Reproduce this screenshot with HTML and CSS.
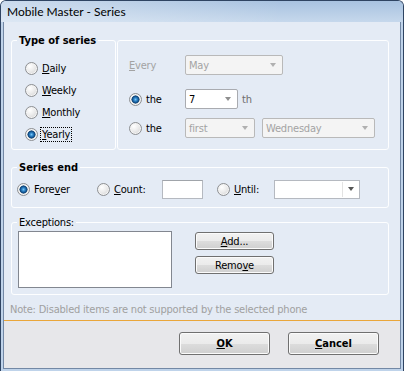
FILE: index.html
```html
<!DOCTYPE html>
<html>
<head>
	<title>Mobile Master - Series</title>
	<link rel="stylesheet" href="styles.css">
</head>
<body>
	<div class="window">
		<div class="titlebar">Mobile Master - Series</div>
		<div class="client">
			<div class="main">
				<div class="type-row">
					<fieldset class="group type-group">
						<legend>Type of series</legend>
						<div class="type-list">
							<label class="option"><span class="radio"></span><span><u>D</u>aily</span></label>
							<label class="option"><span class="radio"></span><span><u>W</u>eekly</span></label>
							<label class="option"><span class="radio"></span><span><u>M</u>onthly</span></label>
							<label class="option"><span class="radio checked"></span><span class="focus"><u>Y</u>early</span></label>
						</div>
					</fieldset>
					<fieldset class="group pattern-group">
						<div class="pattern">
							<div class="pattern-row">
								<span class="pattern-label disabled"><u>E</u>very</span>
								<div class="combo disabled combo-month"><span>May</span><i class="arrow"></i></div>
							</div>
							<div class="pattern-row row-day">
								<label class="pattern-label option"><span class="radio checked"></span><span>the</span></label>
								<div class="combo combo-day"><span>7</span><i class="arrow"></i></div>
								<span class="suffix">th</span>
							</div>
							<div class="pattern-row row-week">
								<label class="pattern-label option"><span class="radio"></span><span>the</span></label>
								<div class="combo disabled combo-nth"><span>first</span><i class="arrow"></i></div>
								<div class="combo disabled combo-weekday"><span>Wednesday</span><i class="arrow"></i></div>
							</div>
						</div>
					</fieldset>
				</div>

				<fieldset class="group end-group">
					<legend>Series end</legend>
					<div class="end-row">
						<label class="option opt-forever"><span class="radio checked"></span><span>Fore<u>v</u>er</span></label>
						<label class="option opt-count"><span class="radio"></span><span><u>C</u>ount:</span></label>
						<div class="textbox"></div>
						<label class="option opt-until"><span class="radio"></span><span><u>U</u>ntil:</span></label>
						<div class="combo date-combo"><span></span><b class="sep"></b><i class="arrow"></i></div>
					</div>
				</fieldset>

				<fieldset class="group exceptions-group">
					<legend>Exceptions:</legend>
					<div class="exceptions">
						<div class="listbox"></div>
						<div class="side-buttons">
							<button class="btn"><u>A</u>dd...</button>
							<button class="btn">Remo<u>v</u>e</button>
						</div>
					</div>
				</fieldset>

				<div class="note">Note: Disabled items are not supported by the selected phone</div>
			</div>
			<div class="footer">
				<button class="btn btn-big"><u>O</u>K</button>
				<button class="btn btn-big"><u>C</u>ancel</button>
			</div>
		</div>
	</div>
</body>
</html>
```

FILE: styles.css
```css
* {
	box-sizing: border-box;
}
html, body {
	margin: 0;
	height: 100%;
	overflow: hidden;
}
body {
	font-family: "DejaVu Sans Condensed", "DejaVu Sans", sans-serif;
	font-size: 11px;
	letter-spacing: -0.2px;
	color: #000;
	background: #fff;
}
u {
	text-decoration: underline;
	text-underline-offset: 1px;
}

/* window frame */
.window {
	width: 404px;
	height: 371px;
	display: flex;
	flex-direction: column;
	background: #bfd3ea; /* frame colour */
	border: 1px solid #2f4462;
	border-bottom: none;
	border-radius: 6px 6px 0 0;
	overflow: hidden;
}
.titlebar {
	height: 21px;
	flex: none;
	padding-left: 6px;
	line-height: 21px;
	font-family: Lato, "Liberation Sans", sans-serif;
	font-size: 12px;
	letter-spacing: 0;
	color: #000;
	background:
		linear-gradient(to right, rgba(255, 255, 255, 0.4), rgba(255, 255, 255, 0) 70%),
		linear-gradient(#a8c2e0, #c6d8ec);
}
.client {
	flex: 1;
	display: flex;
	flex-direction: column;
	margin: 0 2px 2px;
	border: 1px solid #7388a5;
	border-top: none;
}
.main {
	background: #e4ebf5;
	padding: 11px 11px 3px 7px;
}

/* group boxes */
.group {
	margin: 0;
	padding: 0;
	min-width: 0;
	border: 1px solid #fdfeff;
	border-radius: 3px;
}
.group legend {
	margin-left: 5px;
	padding: 0 2px;
	line-height: 15px;
	font-weight: bold;
	letter-spacing: 0;
}
.exceptions-group legend {
	font-weight: normal;
	letter-spacing: -0.2px;
}

.type-row {
	display: flex;
	gap: 1px;
}
.type-group {
	width: 105px;
	flex: none;
}
.type-list {
	padding: 9px 0 4px 13px;
}
.type-list .option {
	height: 22px;
}

.option {
	display: flex;
	align-items: center;
	white-space: nowrap;
}
.radio {
	width: 13px;
	height: 13px;
	flex: none;
	margin-right: 4px;
	border: 1px solid #8d8f92;
	border-radius: 50%;
	background: radial-gradient(circle at 35% 30%, #ffffff 0%, #ececec 45%, #cdcdcd 100%);
	box-shadow: inset 0 0 0 1px #f4f4f4;
}
.radio.checked {
	background:
		radial-gradient(circle at 50% 50%, #7cc6f6 0, #2f86c9 1.6px, #0f4a84 3.3px, #335c80 3.9px, rgba(0, 0, 0, 0) 4.3px),
		radial-gradient(circle at 35% 30%, #ffffff 0%, #ececec 45%, #cdcdcd 100%);
}
.focus {
	outline: 1px dotted #000;
	padding: 0 1px;
	margin-left: -1px;
}

/* recurrence pattern */
.pattern-group {
	flex: 1;
	margin-top: 7px;
}
.pattern {
	padding: 14px 0 10px 11px;
}
.pattern-row {
	display: flex;
	align-items: center;
	height: 20px;
}
.row-day {
	margin-top: 14px;
}
.row-week {
	margin-top: 9px;
}
.pattern-label {
	width: 56px;
	flex: none;
}
.disabled {
	color: #a3a3a3;
}
.suffix {
	margin-left: 4px;
	color: #6e6e6e;
}

/* combo boxes */
.combo {
	height: 20px;
	display: flex;
	align-items: center;
	padding-left: 3px;
	background: #fff;
	border: 1px solid #a9abb0;
	border-radius: 2px;
}
.combo.disabled {
	background: #f4f4f4;
	border-color: #b9b9b9;
}
.combo .arrow {
	margin-left: auto;
	margin-right: 6px;
	border-left: 3.5px solid transparent;
	border-right: 3.5px solid transparent;
	border-top: 4px solid #8f8f8f;
}
.combo.disabled .arrow {
	border-top-color: #b0b0b0;
}
.combo-month {
	width: 98px;
}
.combo-day {
	width: 53px;
}
.combo-nth {
	width: 70px;
}
.combo-weekday {
	width: 113px;
	margin-left: 7px;
}

/* series end */
.end-group {
	margin-top: 10px;
}
.end-row {
	display: flex;
	align-items: center;
	height: 18px;
	margin: 5px 0 9px 5px;
}
.opt-forever {
	width: 80px;
}
.opt-count {
	width: 65px;
}
.opt-until {
	width: 57px;
}
.textbox {
	width: 41px;
	height: 19px;
	margin-right: 14px;
	background: #fff;
	border: 1px solid #b5b9c0;
	border-top-color: #a0a4aa;
}
.date-combo {
	width: 86px;
	height: 19px;
	border-radius: 0;
	border-color: #b5b9c0;
}
.date-combo .sep {
	margin-left: auto;
	width: 1px;
	height: 15px;
	background: #e3e3e3;
}
.date-combo .arrow {
	margin-left: 5px;
	margin-right: 5px;
	border-top-color: #555;
}

/* exceptions */
.exceptions-group {
	margin-top: 7px;
}
.exceptions {
	display: flex;
	align-items: flex-start;
	padding: 1px 0 6px 6px;
}
.listbox {
	width: 154px;
	height: 57px;
	background: #fff;
	border: 1px solid #828790;
}
.side-buttons {
	display: flex;
	flex-direction: column;
	gap: 6px;
	margin: 1px 0 0 23px;
}

.btn {
	width: 79px;
	height: 18px;
	display: flex;
	align-items: center;
	justify-content: center;
	padding: 0;
	font: inherit;
	letter-spacing: inherit;
	color: #000;
	border: 1px solid #707070;
	border-radius: 3px;
	background: linear-gradient(#f2f2f2, #ebebeb 50%, #dddddd 50%, #cfcfcf);
	box-shadow: inset 0 0 0 1px #fbfbfb;
}

.note {
	margin: 7px 0 0 -1px;
	line-height: 15px;
	color: #a0a0a0;
	white-space: nowrap;
}

/* bottom buttons */
.footer {
	flex: 1;
	display: flex;
	justify-content: flex-end;
	align-items: flex-start;
	gap: 18px;
	padding: 11px 21px 0 0;
	background: #e7e7ea;
	border-top: 1px solid #eaa63a;
}
.btn-big {
	width: 91px;
	height: 23px;
	font-weight: bold;
	letter-spacing: 0;
}
```
